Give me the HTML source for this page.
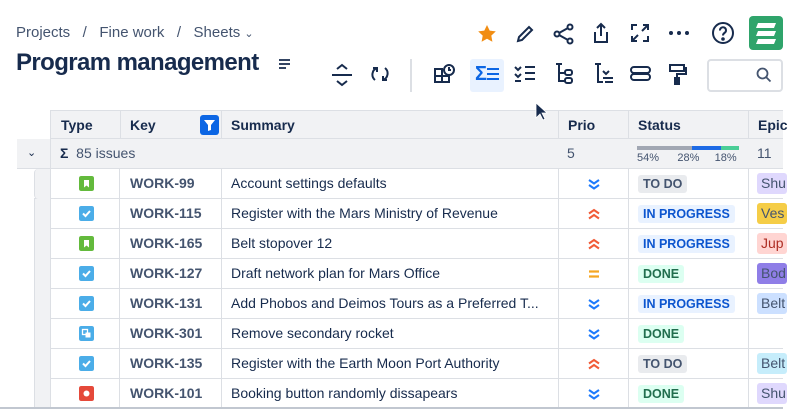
<!DOCTYPE html>
<html><head><meta charset="utf-8"><style>
*{box-sizing:border-box;margin:0;padding:0}
body{width:800px;height:409px;overflow:hidden;background:#fff;font-family:"Liberation Sans",sans-serif;color:#172b4d;position:relative}
.a{position:absolute}
.bc{top:24px;left:16px;font-size:15px;color:#44546f}
h1{position:absolute;left:16px;top:49px;font-size:24px;font-weight:bold;color:#172b4d;letter-spacing:-0.6px}
.ic{position:absolute}
.row{position:absolute;left:34px;width:749px;height:30px;border-bottom:1px solid #dcdfe4}
.c{position:absolute;top:0;height:30px;border-left:1px solid #dcdfe4;font-size:14px;line-height:29px}
.key{color:#44546f;font-weight:bold;padding-left:10px;font-size:14px}
.lz{position:absolute;top:6px;height:18px;border-radius:3px;font-size:12.5px;font-weight:bold;line-height:18px;padding:0 5px}
.todo{background:#e9ebee;color:#44546f}.ip{background:#e9f2ff;color:#0c55cf}.dn{background:#dcfff1;color:#216e4e}
.ep{position:absolute;left:8px;top:4px;width:30px;height:21px;border-radius:3px;font-size:14px;line-height:21px;padding-left:4px;overflow:hidden;color:#44546f}
.ty{position:absolute;left:28px;top:7px;width:15px;height:15px;border-radius:2px}
.ty svg,.pr svg{display:block}
.pr{position:absolute;left:28px;top:8px}
</style></head><body>
<div class="a bc">Projects &nbsp;&nbsp;/&nbsp;&nbsp; Fine work &nbsp;&nbsp;/&nbsp;&nbsp; Sheets <span style="font-size:11px">&#8964;</span></div>
<h1>Program management</h1>
<svg class="ic" style="left:278px;top:58px" width="14" height="12"><path d="M1 2h11M1 6h11M1 10h7" stroke="#172b4d" stroke-width="1.8"/></svg>
<svg class="ic" style="left:477px;top:24px" width="20" height="20"><path d="M10 1l2.7 5.6 6.1.8-4.5 4.2 1.1 6.1L10 14.8l-5.4 2.9 1.1-6.1L1.2 7.4l6.1-.8z" fill="#f18d13"/></svg>
<svg class="ic" style="left:514px;top:23px" width="22" height="22" fill="none" stroke="#172b4d" stroke-width="2"><path d="M4 18l1-4L15 4l3 3L8 17z"/></svg>
<svg class="ic" style="left:553px;top:23px" width="22" height="22" fill="none" stroke="#172b4d" stroke-width="2"><circle cx="17" cy="4" r="2.5"/><circle cx="4" cy="11" r="2.5"/><circle cx="17" cy="18" r="2.5"/><path d="M6 10l9-5M6 12l9 5"/></svg>
<svg class="ic" style="left:591px;top:22px" width="20" height="22" fill="none" stroke="#172b4d" stroke-width="2"><path d="M10 2v12M6 6l4-4 4 4M4 10v10h12V10"/></svg>
<svg class="ic" style="left:630px;top:23px" width="20" height="20" fill="none" stroke="#172b4d" stroke-width="2"><path d="M2 7V2h5M13 2h5v5M18 13v5h-5M7 18H2v-5M3 17l5-5M17 3l-5 5"/></svg>
<svg class="ic" style="left:668px;top:30px" width="22" height="6" fill="#172b4d"><circle cx="3" cy="3" r="2"/><circle cx="11" cy="3" r="2"/><circle cx="19" cy="3" r="2"/></svg>
<svg class="ic" style="left:711px;top:21px" width="24" height="24" fill="none" stroke="#172b4d" stroke-width="2"><circle cx="12" cy="12" r="10"/><path d="M9 9.5a3 3 0 115 2c-1.5 1-2 1.5-2 3"/><circle cx="12" cy="18" r=".8" fill="#172b4d"/></svg>
<div class="a" style="left:749px;top:16px;width:34px;height:34px;background:#2fa46b;border-radius:4px"></div>
<svg class="ic" style="left:749px;top:16px" width="34" height="34" fill="#fff"><path d="M9 7h18l-2 5H7zM9 15h18l-2 5H7zM9 23h18l-2 5H7z"/></svg>
<svg class="ic" style="left:331px;top:63px" width="22" height="24" fill="none" stroke="#172b4d" stroke-width="2"><path d="M1 12h20M6 6l5-4 5 4M6 18l5 4 5-4"/></svg>
<svg class="ic" style="left:370px;top:64px" width="20" height="20" fill="none" stroke="#172b4d" stroke-width="2"><path d="M5 16a7 7 0 0 1 2-12M15 4a7 7 0 0 1-2 12M3 4h4v4M17 16h-4v-4"/></svg>
<div class="a" style="left:410px;top:59px;width:2px;height:33px;background:#dcdfe4"></div>
<svg class="ic" style="left:433px;top:63px" width="24" height="22" fill="none" stroke="#172b4d" stroke-width="2"><path d="M2 6h7v13H2zM2 13h14v6H9"/><circle cx="16" cy="7" r="5"/><path d="M16 4v3h2"/></svg>
<div class="a" style="left:470px;top:59px;width:34px;height:33px;background:#e9f2ff;border-radius:3px"></div>
<div class="a" style="left:475px;top:63px;font-size:20px;font-weight:bold;color:#0c66e4">Σ</div>
<svg class="ic" style="left:486px;top:67px" width="14" height="16"><path d="M1 2h12M1 7h12M1 12h12" stroke="#0c66e4" stroke-width="2"/></svg>
<svg class="ic" style="left:514px;top:64px" width="24" height="20" fill="none" stroke="#172b4d" stroke-width="2"><path d="M1 3l3 3 3-3M1 10l3 3 3-3M11 3h10M11 9h10M11 15h10M1 17h6"/></svg>
<svg class="ic" style="left:554px;top:62px" width="20" height="24" fill="none" stroke="#172b4d" stroke-width="2"><path d="M2 2h6M5 2v17h6M5 11h6"/><rect x="11" y="8" width="7" height="5" rx="2"/><rect x="11" y="16" width="7" height="5" rx="2"/></svg>
<svg class="ic" style="left:593px;top:62px" width="22" height="24" fill="none" stroke="#172b4d" stroke-width="2"><path d="M2 2h6M5 2v18h5M10 9l3 3 3-3M10 16h10M12 20h8"/></svg>
<svg class="ic" style="left:629px;top:64px" width="24" height="20" fill="none" stroke="#172b4d" stroke-width="2"><rect x="2" y="3" width="19" height="6" rx="3"/><rect x="2" y="10" width="19" height="6" rx="3"/></svg>
<svg class="ic" style="left:668px;top:62px" width="20" height="24" fill="none" stroke="#172b4d" stroke-width="2"><path d="M2 3h14v6H2zM16 6h2v6H9v4"/><rect x="7" y="16" width="4" height="6" fill="#172b4d"/></svg>
<div class="a" style="left:707px;top:59px;width:76px;height:33px;border:2px solid #dcdfe4;border-radius:4px"></div>
<svg class="ic" style="left:756px;top:67px" width="16" height="16" fill="none" stroke="#44546f" stroke-width="1.8"><circle cx="6.5" cy="6.5" r="5"/><path d="M10 10l4.5 4.5"/></svg>
<div class="a" style="left:50px;top:110px;width:733px;height:29px;background:#f1f2f4;border-top:1px solid #dcdfe4;border-bottom:1px solid #dcdfe4;border-left:1px solid #dcdfe4;font-size:14px;font-weight:bold;line-height:28px">
<span class="a" style="left:10px">Type</span>
<span class="a" style="left:69px;border-left:1px solid #dcdfe4;padding-left:9px;height:28px">Key</span>
<div class="a" style="left:149px;top:4px;width:19px;height:20px;background:#0c66e4;border-radius:3px"><svg width="19" height="20"><path d="M4 5h11l-4 5v5l-3 1v-6z" fill="#fff"/></svg></div>
<span class="a" style="left:170px;border-left:1px solid #dcdfe4;padding-left:9px;height:28px">Summary</span>
<span class="a" style="left:507px;border-left:1px solid #dcdfe4;padding-left:9px;height:28px">Prio</span>
<span class="a" style="left:577px;border-left:1px solid #dcdfe4;padding-left:9px;height:28px">Status</span>
<span class="a" style="left:697px;border-left:1px solid #dcdfe4;padding-left:9px;height:28px">Epic</span>
</div>
<div class="a" style="left:17px;top:139px;width:766px;height:30px;background:#f1f2f4;border-bottom:1px solid #dcdfe4;font-size:14px;line-height:29px;color:#44546f">
<span class="a" style="left:10px;font-size:11px;color:#172b4d">&#8964;</span>
<div class="a" style="left:33px;top:0;width:1px;height:30px;background:#dcdfe4"></div>
<span class="a" style="left:43px"><b style="color:#172b4d">Σ</b>&nbsp; 85 issues</span>
<span class="a" style="left:550px">5</span>
<div class="a" style="left:620px;top:7px;width:55px;height:4px;background:#a1a7b3"></div>
<div class="a" style="left:675px;top:7px;width:29px;height:4px;background:#1d6ae5"></div>
<div class="a" style="left:704px;top:7px;width:18px;height:4px;background:#4bce97"></div>
<span class="a" style="left:620px;font-size:11px;line-height:14px;top:12px">54%&nbsp;&nbsp;&nbsp;&nbsp;&nbsp;&nbsp;28%&nbsp;&nbsp;&nbsp;&nbsp;&nbsp;18%</span>
<span class="a" style="left:740px">11</span>
</div>
<svg width="0" height="0" style="position:absolute"><defs>
<symbol id="dn" viewBox="0 0 14 14"><path d="M2 3l5 3.5L12 3M2 8l5 3.5L12 8" fill="none" stroke="#1d7afc" stroke-width="2"/></symbol>
<symbol id="up" viewBox="0 0 14 14"><path d="M2 6.5L7 3l5 3.5M2 11.5L7 8l5 3.5" fill="none" stroke="#f15b37" stroke-width="2"/></symbol>
<symbol id="md" viewBox="0 0 14 14"><path d="M2 4.5h10M2 9.5h10" fill="none" stroke="#f5a623" stroke-width="2.2"/></symbol>
<symbol id="st" viewBox="0 0 15 15"><rect width="15" height="15" rx="2" fill="#63ba3c"/><path d="M5 4h5v7.5L7.5 9.5 5 11.5z" fill="#fff"/></symbol>
<symbol id="tk" viewBox="0 0 15 15"><rect width="15" height="15" rx="2" fill="#4bade8"/><path d="M4 7.5l2.5 2.5L11 5" fill="none" stroke="#fff" stroke-width="2"/></symbol>
<symbol id="sb" viewBox="0 0 15 15"><rect width="15" height="15" rx="2" fill="#4bade8"/><rect x="3.5" y="3.5" width="5" height="5" fill="none" stroke="#fff" stroke-width="1.3"/><rect x="6.5" y="6.5" width="5" height="5" fill="#fff"/></symbol>
<symbol id="bg" viewBox="0 0 15 15"><rect width="15" height="15" rx="2" fill="#e5493a"/><circle cx="7.5" cy="7.5" r="3" fill="#fff"/></symbol>
</defs></svg>
<div class="row" style="top:169px"><div class="c" style="left:0;width:16px;background:#f1f2f4;border-radius:4px 0 0 4px"></div><div class="c" style="left:16px;width:69px"><svg class="ty" viewBox="0 0 15 15"><use href="#st"/></svg></div><div class="c key" style="left:85px;width:102px">WORK-99</div><div class="c" style="left:187px;width:337px;padding-left:9px">Account settings defaults</div><div class="c" style="left:524px;width:70px"><svg class="pr" width="14" height="14"><use href="#dn"/></svg></div><div class="c" style="left:594px;width:120px"><span class="lz todo" style="left:9px">TO DO</span></div><div class="c" style="left:714px;width:35px"><span class="ep" style="background:#dfd8fd">Shu</span></div></div>
<div class="row" style="top:199px"><div class="c" style="left:0;width:16px;background:#f1f2f4"></div><div class="c" style="left:16px;width:69px"><svg class="ty" viewBox="0 0 15 15"><use href="#tk"/></svg></div><div class="c key" style="left:85px;width:102px">WORK-115</div><div class="c" style="left:187px;width:337px;padding-left:9px">Register with the Mars Ministry of Revenue</div><div class="c" style="left:524px;width:70px"><svg class="pr" width="14" height="14"><use href="#up"/></svg></div><div class="c" style="left:594px;width:120px"><span class="lz ip" style="left:9px">IN PROGRESS</span></div><div class="c" style="left:714px;width:35px"><span class="ep" style="background:#f5cd47">Ves</span></div></div>
<div class="row" style="top:229px"><div class="c" style="left:0;width:16px;background:#f1f2f4"></div><div class="c" style="left:16px;width:69px"><svg class="ty" viewBox="0 0 15 15"><use href="#st"/></svg></div><div class="c key" style="left:85px;width:102px">WORK-165</div><div class="c" style="left:187px;width:337px;padding-left:9px">Belt stopover 12</div><div class="c" style="left:524px;width:70px"><svg class="pr" width="14" height="14"><use href="#up"/></svg></div><div class="c" style="left:594px;width:120px"><span class="lz ip" style="left:9px">IN PROGRESS</span></div><div class="c" style="left:714px;width:35px"><span class="ep" style="background:#ffd5d2;color:#ae2e24">Jup</span></div></div>
<div class="row" style="top:259px"><div class="c" style="left:0;width:16px;background:#f1f2f4"></div><div class="c" style="left:16px;width:69px"><svg class="ty" viewBox="0 0 15 15"><use href="#tk"/></svg></div><div class="c key" style="left:85px;width:102px">WORK-127</div><div class="c" style="left:187px;width:337px;padding-left:9px">Draft network plan for Mars Office</div><div class="c" style="left:524px;width:70px"><svg class="pr" width="14" height="14"><use href="#md"/></svg></div><div class="c" style="left:594px;width:120px"><span class="lz dn" style="left:9px">DONE</span></div><div class="c" style="left:714px;width:35px"><span class="ep" style="background:#8f7ee7">Bod</span></div></div>
<div class="row" style="top:289px"><div class="c" style="left:0;width:16px;background:#f1f2f4"></div><div class="c" style="left:16px;width:69px"><svg class="ty" viewBox="0 0 15 15"><use href="#tk"/></svg></div><div class="c key" style="left:85px;width:102px">WORK-131</div><div class="c" style="left:187px;width:337px;padding-left:9px">Add Phobos and Deimos Tours as a Preferred T...</div><div class="c" style="left:524px;width:70px"><svg class="pr" width="14" height="14"><use href="#dn"/></svg></div><div class="c" style="left:594px;width:120px"><span class="lz ip" style="left:9px">IN PROGRESS</span></div><div class="c" style="left:714px;width:35px"><span class="ep" style="background:#cce0ff">Belt</span></div></div>
<div class="row" style="top:319px"><div class="c" style="left:0;width:16px;background:#f1f2f4"></div><div class="c" style="left:16px;width:69px"><svg class="ty" viewBox="0 0 15 15"><use href="#sb"/></svg></div><div class="c key" style="left:85px;width:102px">WORK-301</div><div class="c" style="left:187px;width:337px;padding-left:9px">Remove secondary rocket</div><div class="c" style="left:524px;width:70px"><svg class="pr" width="14" height="14"><use href="#dn"/></svg></div><div class="c" style="left:594px;width:120px"><span class="lz dn" style="left:9px">DONE</span></div><div class="c" style="left:714px;width:35px"></div></div>
<div class="row" style="top:349px"><div class="c" style="left:0;width:16px;background:#f1f2f4"></div><div class="c" style="left:16px;width:69px"><svg class="ty" viewBox="0 0 15 15"><use href="#tk"/></svg></div><div class="c key" style="left:85px;width:102px">WORK-135</div><div class="c" style="left:187px;width:337px;padding-left:9px">Register with the Earth Moon Port Authority</div><div class="c" style="left:524px;width:70px"><svg class="pr" width="14" height="14"><use href="#up"/></svg></div><div class="c" style="left:594px;width:120px"><span class="lz todo" style="left:9px">TO DO</span></div><div class="c" style="left:714px;width:35px"><span class="ep" style="background:#c6edfb">Belt</span></div></div>
<div class="row" style="top:379px"><div class="c" style="left:0;width:16px;background:#f1f2f4"></div><div class="c" style="left:16px;width:69px"><svg class="ty" viewBox="0 0 15 15"><use href="#bg"/></svg></div><div class="c key" style="left:85px;width:102px">WORK-101</div><div class="c" style="left:187px;width:337px;padding-left:9px">Booking button randomly dissapears</div><div class="c" style="left:524px;width:70px"><svg class="pr" width="14" height="14"><use href="#dn"/></svg></div><div class="c" style="left:594px;width:120px"><span class="lz dn" style="left:9px">DONE</span></div><div class="c" style="left:714px;width:35px"><span class="ep" style="background:#dfd8fd">Shu</span></div></div>
<div class="a" style="left:0;top:407px;width:783px;height:2px;background:#c1c7d0"></div>
<svg class="ic" style="left:535px;top:102px" width="14" height="20"><path d="M1 1v15l4-4 3 6 2-1-3-6h5z" fill="#172b4d" stroke="#fff" stroke-width=".8"/></svg>
</body></html>
